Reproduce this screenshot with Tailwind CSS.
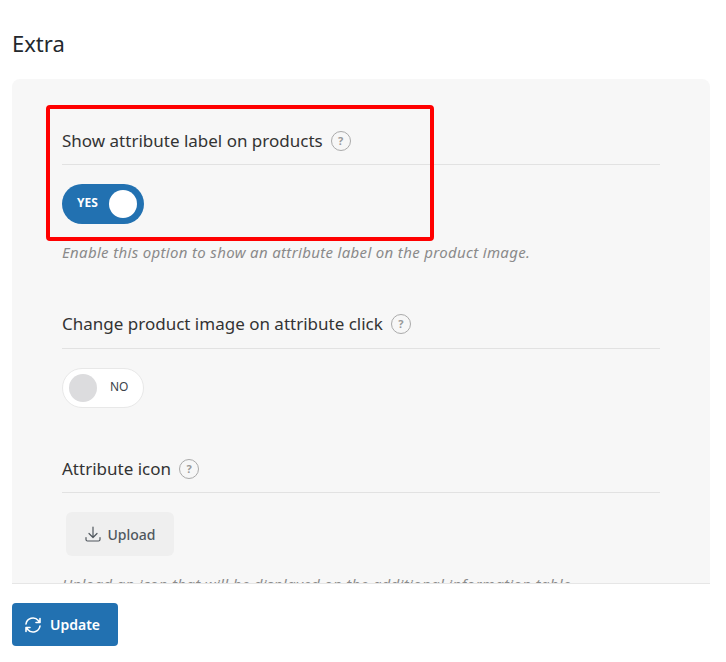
<!DOCTYPE html>
<html lang="en">
<head>
    <meta charset="UTF-8">
    <title>Extra settings</title>
    <script src="https://cdn.jsdelivr.net/npm/@tailwindcss/browser@4"></script>
</head>
<body class="bg-white font-['Noto_Sans',sans-serif] text-[#2c3338]">
    <div class="relative flex h-[662px] w-[726px] flex-col overflow-hidden">
        <div class="h-[583px] overflow-hidden px-3 pt-[28px]">
            <h2 class="h-[32px] text-[22px] leading-[31px] text-[#23282d]">Extra</h2>
            <div class="mt-[19px] w-[698px] rounded-t-lg bg-[#f7f7f7] px-[50px] pt-[46px] pb-10">

                <div class="flex h-10 items-start gap-2 border-b border-[#e2e2e2]">
                    <span class="text-[17px] leading-[32px] text-[#333]">Show attribute label on products</span>
                    <span class="mt-[6px] flex size-5 items-center justify-center rounded-full border border-[#aaa] text-[11px] font-bold text-[#999]">?</span>
                </div>
                <div class="mt-[19px] flex h-10 w-[82px] items-center justify-between rounded-full bg-[#2271b1] pr-[7px] pl-[15px]">
                    <span class="-mt-[2px] text-[12px] font-bold text-white">YES</span>
                    <span class="size-[28px] rounded-full bg-white"></span>
                </div>
                <p class="mt-[16px] text-[15px] leading-[24px] tracking-[0.33px] text-[#8a8a8a] italic">Enable this option to show an attribute label on the product image.</p>

                <div class="mt-[44px] flex h-[41px] items-start gap-2 border-b border-[#e2e2e2]">
                    <span class="text-[17px] leading-[32px] text-[#333]">Change product image on attribute click</span>
                    <span class="mt-[6px] flex size-5 items-center justify-center rounded-full border border-[#aaa] text-[11px] font-bold text-[#999]">?</span>
                </div>
                <div class="mt-[19px] flex h-10 w-[82px] items-center rounded-full border border-[#e8e8e8] bg-white pl-[6px]">
                    <span class="size-[28px] rounded-full bg-[#dcdcde]"></span>
                    <span class="-mt-[2px] ml-[13px] text-[12px] text-[#3c434a]">NO</span>
                </div>

                <div class="mt-[45px] flex h-10 items-start gap-2 border-b border-[#e2e2e2]">
                    <span class="text-[17px] leading-[32px] text-[#333]">Attribute icon</span>
                    <span class="mt-[6px] flex size-5 items-center justify-center rounded-full border border-[#aaa] text-[11px] font-bold text-[#999]">?</span>
                </div>
                <button class="mt-[19px] ml-1 flex h-11 w-[108px] items-center justify-center gap-[5px] rounded-md bg-[#efefef] text-[14px] font-medium text-[#50575e]">
                    <svg class="size-[18px]" viewBox="0 0 18 18" fill="none" stroke="#50575e" stroke-width="1.2" stroke-linecap="round" stroke-linejoin="round"><path d="M9 2v10M5 8.5l4 4 4-4M2 12.5v2a1.5 1.5 0 0 0 1.5 1.5h11a1.5 1.5 0 0 0 1.5-1.5v-2"/></svg>
                    Upload
                </button>
                <p class="mt-[16px] text-[15px] leading-[24px] tracking-[0.33px] text-[#8a8a8a] italic">Upload an icon that will be displayed on the additional information table.</p>
            </div>
        </div>

        <div class="mr-4 ml-3 flex-1 border-t border-[#e6e6e6] pt-[19px]">
            <button class="flex h-[43px] w-[106px] items-center gap-2 rounded bg-[#2271b1] pl-3 text-[14px] font-semibold text-white">
                <svg class="size-[18px]" viewBox="0 0 18 18" fill="none" stroke="white" stroke-width="1.6" stroke-linecap="round" stroke-linejoin="round"><path d="M2 8a7 7 0 0 1 12.3-3.4L16 6.5M16 2.5v4h-4M16 10a7 7 0 0 1-12.3 3.4L2 11.5M2 15.5v-4h4"/></svg>
                Update
            </button>
        </div>

        <!-- red highlight over the first option -->
        <div class="absolute top-[105px] left-[46px] h-[136px] w-[388px] rounded-sm border-4 border-[#ff0000]"></div>
    </div>
</body>
</html>
